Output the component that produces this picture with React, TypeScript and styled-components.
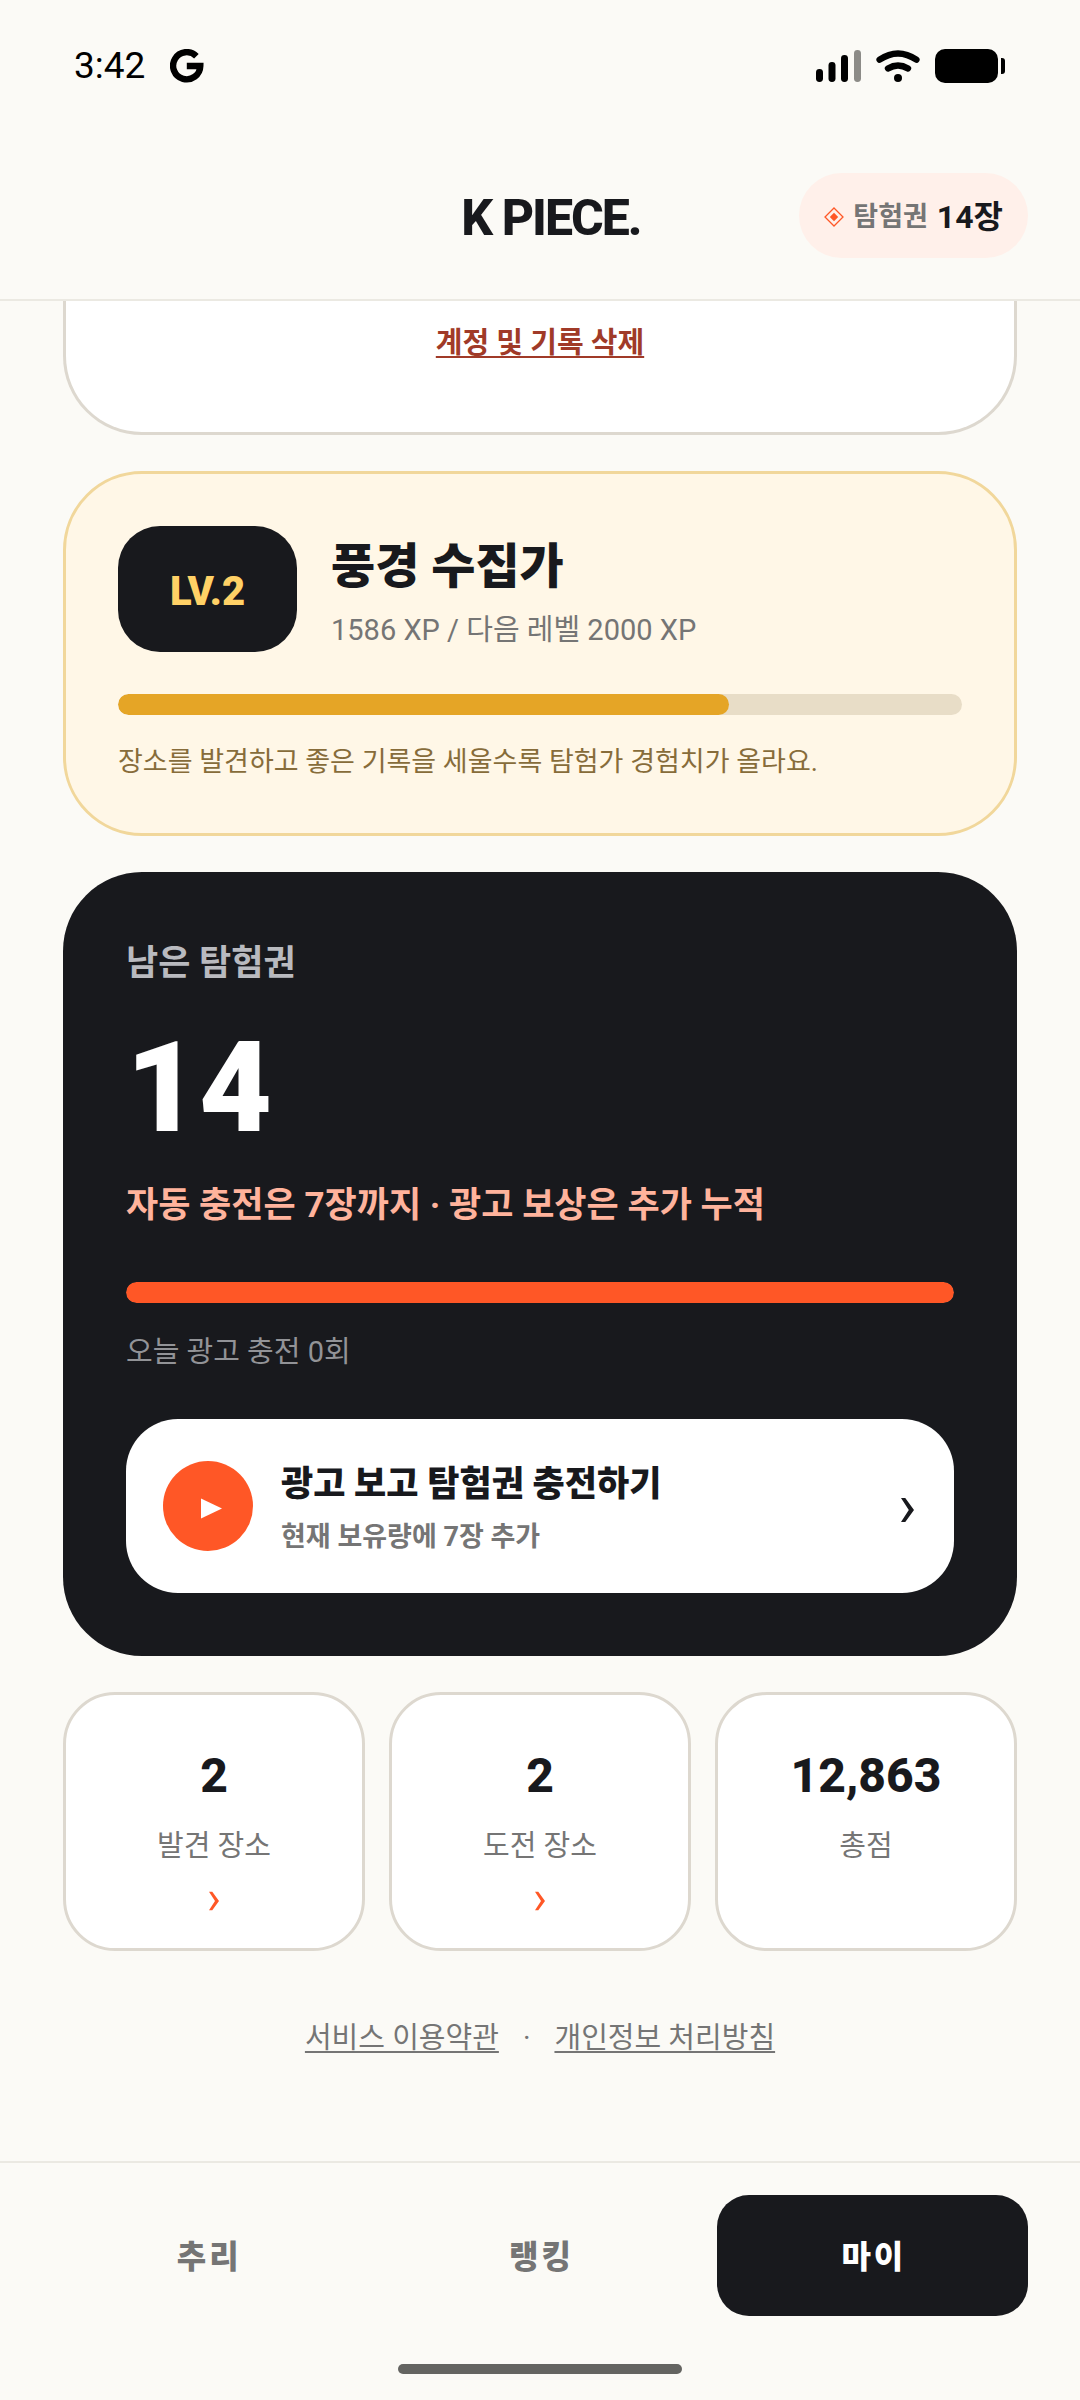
import React from "react";
import styled, { createGlobalStyle } from "styled-components";

const ink = "#18191d";
const paper = "#fbfaf6";
const muted = "#757575";
const orange = "#ff5726";
const line = "#ddd8cf";
const hairline = "#ebe9e2";

const GlobalStyle = createGlobalStyle`
  * { box-sizing: border-box; }
  body { margin: 0; background: ${paper}; }
  body, button {
    font-family: Roboto, "Noto Sans CJK KR", sans-serif;
    color: ${ink};
  }
  button { margin: 0; padding: 0; border: 0; background: none; cursor: pointer; }
  p, h1, h2 { margin: 0; }
`;

const Screen = styled.div`
  display: flex;
  flex-direction: column;
  min-height: 100vh;
  background: ${paper};
`;

const StatusBar = styled.div`
  display: flex;
  justify-content: space-between;
  align-items: center;
  height: 131px;
  padding: 0 75px 0 74px;
  color: #000;
`;

const StatusGroup = styled.div<{ $gap: number }>`
  display: flex;
  align-items: center;
  gap: ${(p) => p.$gap}px;
`;

const Clock = styled.span`
  font-size: 37px;
  line-height: 44px;
`;

const Header = styled.header`
  display: grid;
  grid-template-columns: 1fr auto 1fr;
  align-items: center;
  height: 170px;
  padding: 0 52px 0 74px;
  border-bottom: 2px solid ${hairline};
`;

const Brand = styled.h1`
  grid-column: 2;
  padding-top: 6px;
  font-size: 50px;
  line-height: 60px;
  font-weight: 800;
  letter-spacing: -2px;
`;

const TicketPill = styled.div`
  display: flex;
  justify-self: end;
  align-items: center;
  gap: 9px;
  height: 85px;
  padding: 4px 25px 0;
  border-radius: 43px;
  background: #fff0ea;
  font-weight: 700;
  line-height: 48px;
`;

const PillLabel = styled.span`
  font-size: 27px;
  color: ${muted};
`;

const PillCount = styled.strong`
  font-size: 32px;
  font-weight: 700;
`;

const Content = styled.main`
  display: flex;
  flex-direction: column;
  gap: 36px;
  padding: 0 63px;
`;

const AccountCard = styled.section`
  display: flex;
  justify-content: center;
  padding: 22px 52px 69px;
  border: 3px solid ${line};
  border-top: 0;
  border-radius: 0 0 79px 79px;
  background: #fff;
`;

const DeleteLink = styled.a`
  font-size: 29px;
  line-height: 40px;
  font-weight: 700;
  color: #a03a28;
  text-decoration: underline;
  text-decoration-thickness: 2px;
  text-underline-offset: 3px;
  text-decoration-skip-ink: none;
`;

const LevelCard = styled.section`
  padding: 52px;
  border: 3px solid #f1d79b;
  border-radius: 79px;
  background: #fff7e7;
`;

const LevelTop = styled.div`
  display: flex;
  align-items: center;
  gap: 34px;
`;

const LevelBadge = styled.div`
  display: flex;
  align-items: center;
  justify-content: center;
  width: 179px;
  height: 126px;
  padding-top: 4px;
  border-radius: 42px;
  background: ${ink};
  color: #ffd166;
  font-size: 40px;
  font-weight: 900;
`;

const LevelName = styled.h2`
  font-size: 48px;
  line-height: 82px;
  font-weight: 900;
`;

const LevelXp = styled.p`
  font-size: 29px;
  line-height: 44px;
  color: ${muted};
`;

const Track = styled.div<{ $color: string; $top: number }>`
  height: 21px;
  margin-top: ${(p) => p.$top}px;
  border-radius: 11px;
  background: ${(p) => p.$color};
  overflow: hidden;
`;

const Fill = styled.div<{ $color: string }>`
  height: 100%;
  border-radius: 11px;
  background: ${(p) => p.$color};
`;

const LevelHint = styled.p`
  margin-top: 28px;
  font-size: 27px;
  line-height: 38px;
  color: #876c3a;
`;

const TicketCard = styled.section`
  padding: 63px;
  border-radius: 79px;
  background: ${ink};
`;

const TicketLabel = styled.p`
  font-size: 35px;
  line-height: 58px;
  font-weight: 700;
  color: #b9babf;
`;

const TicketCount = styled.p`
  margin-top: 21px;
  font-size: 126px;
  line-height: 148px;
  font-weight: 900;
  color: #fff;
`;

const TicketRule = styled.p`
  margin-top: 21px;
  font-size: 35px;
  line-height: 46px;
  font-weight: 700;
  color: #ffb39c;
`;

const TicketToday = styled.p`
  margin-top: 29px;
  font-size: 29px;
  line-height: 40px;
  color: #929397;
`;

const ChargeButton = styled.button`
  display: flex;
  align-items: center;
  gap: 28px;
  width: 100%;
  margin-top: 47px;
  padding: 37px 40px 37px 37px;
  border-radius: 52px;
  background: #fff;
  text-align: left;
`;

const PlayCircle = styled.span`
  display: flex;
  align-items: center;
  justify-content: center;
  width: 90px;
  height: 90px;
  padding: 4px 0 0 6px;
  border-radius: 50%;
  background: ${orange};
`;

const ChargeText = styled.span`
  display: flex;
  flex: 1;
  flex-direction: column;
  gap: 4px;
`;

const ChargeTitle = styled.strong`
  font-size: 35px;
  line-height: 58px;
  font-weight: 900;
`;

const ChargeNote = styled.span`
  font-size: 27px;
  line-height: 38px;
  font-weight: 700;
  color: ${muted};
`;

const ChargeArrow = styled.span`
  display: flex;
  padding-top: 8px;
`;

const Stats = styled.section`
  display: grid;
  grid-template-columns: repeat(3, 1fr);
  gap: 24px;
`;

const StatCard = styled.div`
  display: flex;
  flex-direction: column;
  align-items: center;
  padding: 45px 20px 37px;
  border: 3px solid ${line};
  border-radius: 52px;
  background: #fff;
`;

const StatButton = styled(StatCard).attrs({ as: "button" })`
  padding: 45px 20px 37px;
  border: 3px solid ${line};
  background: #fff;
`;

const StatValue = styled.strong`
  font-size: 48px;
  line-height: 72px;
  font-weight: 800;
`;

const StatLabel = styled.span`
  margin: 14px 0 25px;
  font-size: 29px;
  line-height: 40px;
  color: ${muted};
`;

const Legal = styled.footer`
  display: flex;
  justify-content: center;
  gap: 24px;
  margin: 67px 0 60px;
  font-size: 29px;
  line-height: 40px;
  color: ${muted};
`;

const LegalLink = styled.a`
  color: ${muted};
  text-decoration: underline;
  text-decoration-thickness: 2px;
  text-underline-offset: 3px;
  text-decoration-skip-ink: none;
`;

const BottomBar = styled.div`
  margin-top: auto;
  padding: 32px 52px 26px;
  border-top: 2px solid ${hairline};
`;

const Tabs = styled.nav`
  display: grid;
  grid-template-columns: repeat(3, 1fr);
  gap: 21px;
`;

const Tab = styled.button<{ $active?: boolean }>`
  && {
    height: 121px;
    padding: 0 0 4px 3px;
    border-radius: 32px;
    background: ${(p) => (p.$active ? ink : "transparent")};
    color: ${(p) => (p.$active ? "#fff" : muted)};
    font-size: 32px;
    font-weight: 900;
    letter-spacing: 3px;
  }
`;

const HomeIndicator = styled.div`
  width: 284px;
  height: 10px;
  margin: 48px auto 0;
  border-radius: 5px;
  background: #646461;
`;

const GoogleMark = () => (
  <svg width="34" height="34" viewBox="0 0 34 34" fill="none" stroke="#000" strokeWidth="6.4">
    <path d="M26.4 7.2A13.6 13.6 0 1 0 30.3 17H16.8" />
  </svg>
);

const SignalBars = () => (
  <svg width="45" height="32" viewBox="0 0 45 32">
    <rect x="0" y="19" width="7" height="13" rx="3.4" />
    <rect x="12.5" y="12" width="7" height="20" rx="3.4" />
    <rect x="25" y="5" width="7" height="27" rx="3.4" />
    <rect x="38" y="0" width="7" height="32" rx="3.4" fill="#8c8b87" />
  </svg>
);

const WifiMark = () => (
  <svg width="44" height="32" viewBox="0 0 44 32" fill="none" stroke="#000" strokeWidth="6.4" strokeLinecap="round">
    <path d="M3.6 9.6Q22 -2.8 40.4 9.6" />
    <path d="M12 18.4Q22 12.4 32 18.4" />
    <circle cx="22" cy="28" r="4" fill="#000" stroke="none" />
  </svg>
);

const BatteryMark = () => (
  <svg width="70" height="34" viewBox="0 0 70 34">
    <rect x="0" y="0" width="63" height="34" rx="10" />
    <path d="M66 9h1a3 3 0 0 1 3 3v10a3 3 0 0 1-3 3h-1z" />
  </svg>
);

const TicketMark = () => (
  <svg width="20" height="20" viewBox="0 0 20 20">
    <path d="M10 1L19 10L10 19L1 10Z" fill="none" stroke={orange} strokeWidth="1.3" />
    <path d="M10 5.8L14.2 10L10 14.2L5.8 10Z" fill={orange} />
  </svg>
);

const PlayMark = () => (
  <svg width="21" height="21" viewBox="0 0 21 21">
    <path d="M0 0.5L21 10.5L0 20.5Z" fill="#fff" />
  </svg>
);

const Chevron = ({ size, color }: { size: number; color: string }) => (
  <svg width={size / 2} height={size} viewBox="0 0 14 26" fill={color}>
    <path d="M0 0H4.6L14 13L4.6 26H0L8.4 13Z" />
  </svg>
);

const stats = [
  { value: 2, label: "발견 장소", opens: true },
  { value: 2, label: "도전 장소", opens: true },
  { value: 12863, label: "총점", opens: false },
];

const tabs = ["추리", "랭킹", "마이"];

const xp = 1586;
const levelFloor = 500;
const nextLevel = 2000;

export default function App() {
  const progress = ((xp - levelFloor) / (nextLevel - levelFloor)) * 100;
  return (
    <Screen>
      <GlobalStyle />
      <StatusBar>
        <StatusGroup $gap={25}>
          <Clock>3:42</Clock>
          <GoogleMark />
        </StatusGroup>
        <StatusGroup $gap={15}>
          <SignalBars />
          <WifiMark />
          <BatteryMark />
        </StatusGroup>
      </StatusBar>
      <Header>
        <Brand>K PIECE.</Brand>
        <TicketPill>
          <TicketMark />
          <PillLabel>탐험권</PillLabel>
          <PillCount>14장</PillCount>
        </TicketPill>
      </Header>
      <Content>
        <AccountCard>
          <DeleteLink href="#delete">계정 및 기록 삭제</DeleteLink>
        </AccountCard>

        <LevelCard>
          <LevelTop>
            <LevelBadge>LV.2</LevelBadge>
            <div>
              <LevelName>풍경 수집가</LevelName>
              <LevelXp>{xp} XP / 다음 레벨 {nextLevel} XP</LevelXp>
            </div>
          </LevelTop>
          <Track $color="#e8ddc7" $top={42}>
            <Fill $color="#e5a526" style={{ width: `${progress}%` }} />
          </Track>
          <LevelHint>장소를 발견하고 좋은 기록을 세울수록 탐험가 경험치가 올라요.</LevelHint>
        </LevelCard>

        <TicketCard>
          <TicketLabel>남은 탐험권</TicketLabel>
          <TicketCount>14</TicketCount>
          <TicketRule>자동 충전은 7장까지 · 광고 보상은 추가 누적</TicketRule>
          <Track $color="#34353a" $top={53}>
            <Fill $color={orange} />
          </Track>
          <TicketToday>오늘 광고 충전 0회</TicketToday>
          <ChargeButton type="button">
            <PlayCircle>
              <PlayMark />
            </PlayCircle>
            <ChargeText>
              <ChargeTitle>광고 보고 탐험권 충전하기</ChargeTitle>
              <ChargeNote>현재 보유량에 7장 추가</ChargeNote>
            </ChargeText>
            <ChargeArrow>
              <Chevron size={26} color={ink} />
            </ChargeArrow>
          </ChargeButton>
        </TicketCard>

        <Stats>
          {stats.map(({ value, label, opens }) => {
            const Box = opens ? StatButton : StatCard;
            return (
              <Box key={label}>
                <StatValue>{value.toLocaleString("en-US")}</StatValue>
                <StatLabel>{label}</StatLabel>
                {opens && <Chevron size={20} color={orange} />}
              </Box>
            );
          })}
        </Stats>
      </Content>
      <Legal>
        <LegalLink href="#terms">서비스 이용약관</LegalLink>
        <span>·</span>
        <LegalLink href="#privacy">개인정보 처리방침</LegalLink>
      </Legal>
      <BottomBar>
        <Tabs>
          {tabs.map((name, i) => (
            <Tab key={name} type="button" $active={i === 2}>
              {name}
            </Tab>
          ))}
        </Tabs>
        <HomeIndicator />
      </BottomBar>
    </Screen>
  );
}
